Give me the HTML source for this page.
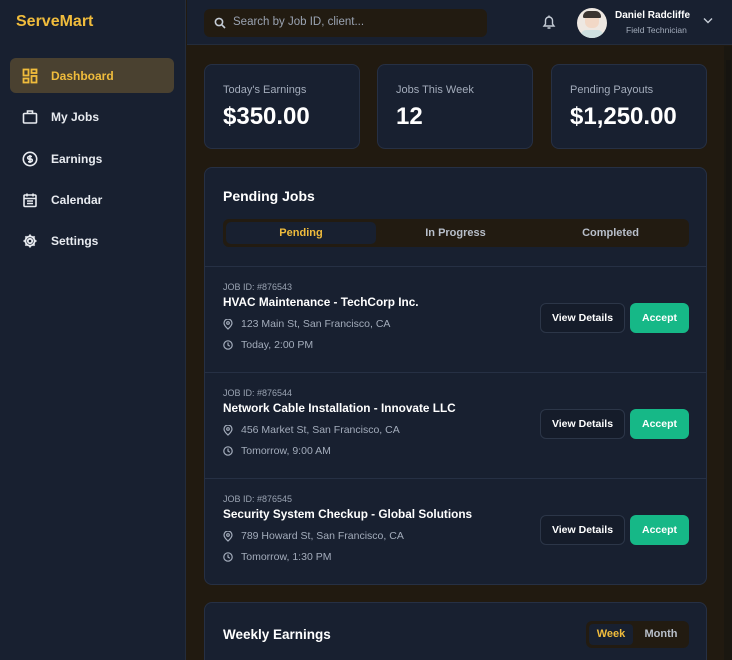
<!DOCTYPE html>
<html><head><style>
*{box-sizing:border-box;margin:0;padding:0}
html{width:732px;height:660px;overflow:hidden}
body{width:732px;height:660px;overflow:hidden;background:#211a10;font-family:"Liberation Sans",sans-serif;color:#fff;position:relative}
.side{position:absolute;left:0;top:0;width:186px;height:660px;background:#182030;border-right:1px solid #232c3c}
.logo{position:absolute;left:16px;top:13px;font-size:16px;font-weight:bold;color:#f0bc3c}
.nav{position:absolute;left:10px;width:164px;height:35px;display:flex;align-items:center;padding-left:12px;font-size:12px;font-weight:bold;color:#e8ebf0}
.nav svg{margin-right:13px}
.nav.act{background:#4a4130;color:#f0bc3c;border-radius:6px}
.top{position:absolute;left:187px;top:0;width:545px;height:45px;background:#182030;border-bottom:1px solid #232c3c}
.search{position:absolute;left:17px;top:9px;width:283px;height:28px;background:#221b11;border-radius:6px;font-size:11.5px;color:#9aa3b2;padding:7px 0 0 29px}
.card{position:absolute;background:#182030;border:1px solid #263044;border-radius:8px}
.lab{font-size:11px;color:#a3acbb;position:absolute;left:18px;top:19px}
.val{font-size:24px;font-weight:bold;position:absolute;left:18px;top:38px}
.job{position:absolute;left:0;width:502px;border-top:1px solid #263044;height:107px}
.jid{position:absolute;left:18px;top:15px;font-size:9px;color:#9aa3b2}
.jt{position:absolute;left:18px;top:28px;font-size:11.8px;font-weight:bold}
.jl{position:absolute;left:18px;font-size:10.5px;color:#a3acbb;display:flex;align-items:center}
.jl svg{margin-right:8px}
.vd{position:absolute;left:335px;top:36px;width:85px;height:30px;border:1px solid #2c3648;border-radius:6px;background:#151c2a;font-size:10.5px;font-weight:bold;text-align:center;line-height:28px}
.ac{position:absolute;left:425px;top:36px;width:59px;height:30px;border-radius:6px;background:#16b887;font-size:10.5px;font-weight:bold;text-align:center;line-height:30px}
</style></head><body>
<div class="side">
<div class="logo">ServeMart</div>
<div class="nav act" style="top:58px"><svg width="16" height="16" viewBox="0 0 16 16" fill="none" stroke="#f0bc3c" stroke-width="1.8"><rect x="1.5" y="1.5" width="5" height="6"/><rect x="9.5" y="1.5" width="5" height="3.5"/><rect x="1.5" y="10.5" width="5" height="4"/><rect x="9.5" y="8" width="5" height="6.5"/></svg>Dashboard</div>
<div class="nav" style="top:99px"><svg width="16" height="16" viewBox="0 0 16 16" fill="none" stroke="#e8ebf0" stroke-width="1.6"><rect x="1.5" y="4.5" width="13" height="9.5" rx="1"/><path d="M5.5 4.5V2h5v2.5"/></svg>My Jobs</div>
<div class="nav" style="top:141px"><svg width="16" height="16" viewBox="0 0 16 16" fill="none" stroke="#e8ebf0" stroke-width="1.6"><circle cx="8" cy="8" r="6.7"/><path d="M10 5.5H7a1.3 1.3 0 000 2.6h2a1.3 1.3 0 010 2.6H6M8 4v8"/></svg>Earnings</div>
<div class="nav" style="top:182px"><svg width="16" height="16" viewBox="0 0 16 16" fill="none" stroke="#e8ebf0" stroke-width="1.6"><rect x="2" y="3" width="12" height="11.5" rx="1"/><path d="M2 6.5h12M5 1.5v3M11 1.5v3M5 9h6M5 11.5h6"/></svg>Calendar</div>
<div class="nav" style="top:223px"><svg width="16" height="16" viewBox="0 0 16 16" fill="none" stroke="#e8ebf0" stroke-width="1.8"><circle cx="8" cy="8" r="2.2"/><path d="M8 1.5v2M8 12.5v2M1.5 8h2M12.5 8h2M3.4 3.4l1.4 1.4M11.2 11.2l1.4 1.4M3.4 12.6l1.4-1.4M11.2 4.8l1.4-1.4"/><circle cx="8" cy="8" r="4.6"/></svg>Settings</div>
</div>
<div class="top">
<div class="search"><svg style="position:absolute;left:10px;top:8px" width="12" height="12" viewBox="0 0 12 12" fill="none" stroke="#c5ccd6" stroke-width="1.6"><circle cx="5" cy="5" r="3.6"/><path d="M7.7 7.7L11 11"/></svg>Search by Job ID, client...</div>
<svg style="position:absolute;left:355px;top:14px" width="14" height="16" viewBox="0 0 14 16" fill="none" stroke="#c5ccd6" stroke-width="1.4"><path d="M2 12h10l-1.5-2V6.5a3.5 3.5 0 00-7 0V10z"/><path d="M5.5 14h3M7 1.5V3"/></svg>
<div style="position:absolute;left:390px;top:8px;width:30px;height:30px;border-radius:50%;background:#eee8e2;overflow:hidden"><div style="position:absolute;left:8px;top:5px;width:14px;height:15px;border-radius:6px;background:#f2d8c6"></div><div style="position:absolute;left:6px;top:3px;width:18px;height:7px;border-radius:8px 8px 2px 2px;background:#3a3430"></div><div style="position:absolute;left:4px;top:22px;width:22px;height:10px;border-radius:8px;background:#cfe0e0"></div></div>
<div style="position:absolute;left:428px;top:10px;font-size:10px;font-weight:bold">Daniel Radcliffe</div>
<div style="position:absolute;left:439px;top:25px;font-size:8.5px;color:#a3acbb">Field Technician</div>
<svg style="position:absolute;left:516px;top:17px" width="10" height="7" viewBox="0 0 10 7" fill="none" stroke="#c5ccd6" stroke-width="1.4"><path d="M1 1.5l4 4 4-4"/></svg>
</div>
<div style="position:absolute;left:724px;top:46px;width:8px;height:614px;background:#1a1710"></div>
<div style="position:absolute;left:726px;top:60px;width:5px;height:310px;background:#161410"></div>
<div class="card" style="left:204px;top:64px;width:156px;height:85px"><div class="lab">Today's Earnings</div><div class="val">$350.00</div></div>
<div class="card" style="left:377px;top:64px;width:156px;height:85px"><div class="lab">Jobs This Week</div><div class="val">12</div></div>
<div class="card" style="left:551px;top:64px;width:156px;height:85px"><div class="lab">Pending Payouts</div><div class="val">$1,250.00</div></div>
<div class="card" style="left:204px;top:167px;width:503px;height:418px">
<div style="position:absolute;left:18px;top:20px;font-size:14px;font-weight:bold">Pending Jobs</div>
<div style="position:absolute;left:18px;top:51px;width:466px;height:28px;background:#221b11;border-radius:6px;font-size:11px;font-weight:bold;color:#b8bfca">
<div style="position:absolute;left:3px;top:3px;width:150px;height:22px;background:#182030;border-radius:5px;color:#f0bc3c;text-align:center;line-height:22px">Pending</div>
<div style="position:absolute;left:155px;top:3px;width:155px;text-align:center;line-height:22px">In Progress</div>
<div style="position:absolute;left:310px;top:3px;width:155px;text-align:center;line-height:22px">Completed</div>
</div>
<div class="job" style="top:98px"><div class="jid">JOB ID: #876543</div><div class="jt">HVAC Maintenance - TechCorp Inc.</div>
<div class="jl" style="top:51px"><svg width="10" height="11" viewBox="0 0 10 11" fill="none" stroke="#a3acbb" stroke-width="1.2"><path d="M5 10s4-3.5 4-6a4 4 0 00-8 0c0 2.5 4 6 4 6z"/><circle cx="5" cy="4" r="1.3"/></svg>123 Main St, San Francisco, CA</div>
<div class="jl" style="top:72px"><svg width="10" height="10" viewBox="0 0 10 10" fill="none" stroke="#a3acbb" stroke-width="1.2"><circle cx="5" cy="5" r="4.2"/><path d="M5 2.5V5l1.8 1.2"/></svg>Today, 2:00 PM</div>
<div class="vd">View Details</div><div class="ac">Accept</div></div>
<div class="job" style="top:204px"><div class="jid">JOB ID: #876544</div><div class="jt">Network Cable Installation - Innovate LLC</div>
<div class="jl" style="top:51px"><svg width="10" height="11" viewBox="0 0 10 11" fill="none" stroke="#a3acbb" stroke-width="1.2"><path d="M5 10s4-3.5 4-6a4 4 0 00-8 0c0 2.5 4 6 4 6z"/><circle cx="5" cy="4" r="1.3"/></svg>456 Market St, San Francisco, CA</div>
<div class="jl" style="top:72px"><svg width="10" height="10" viewBox="0 0 10 10" fill="none" stroke="#a3acbb" stroke-width="1.2"><circle cx="5" cy="5" r="4.2"/><path d="M5 2.5V5l1.8 1.2"/></svg>Tomorrow, 9:00 AM</div>
<div class="vd">View Details</div><div class="ac">Accept</div></div>
<div class="job" style="top:310px"><div class="jid">JOB ID: #876545</div><div class="jt">Security System Checkup - Global Solutions</div>
<div class="jl" style="top:51px"><svg width="10" height="11" viewBox="0 0 10 11" fill="none" stroke="#a3acbb" stroke-width="1.2"><path d="M5 10s4-3.5 4-6a4 4 0 00-8 0c0 2.5 4 6 4 6z"/><circle cx="5" cy="4" r="1.3"/></svg>789 Howard St, San Francisco, CA</div>
<div class="jl" style="top:72px"><svg width="10" height="10" viewBox="0 0 10 10" fill="none" stroke="#a3acbb" stroke-width="1.2"><circle cx="5" cy="5" r="4.2"/><path d="M5 2.5V5l1.8 1.2"/></svg>Tomorrow, 1:30 PM</div>
<div class="vd">View Details</div><div class="ac">Accept</div></div>
</div>
<div class="card" style="left:204px;top:602px;width:503px;height:70px">
<div style="position:absolute;left:18px;top:24px;font-size:13.5px;font-weight:bold">Weekly Earnings</div>
<div style="position:absolute;left:381px;top:18px;width:103px;height:27px;background:#221b11;border-radius:6px;font-size:11px;font-weight:bold">
<div style="position:absolute;left:3px;top:3px;width:44px;height:21px;background:#182030;border-radius:4px;color:#f0bc3c;text-align:center;line-height:21px">Week</div>
<div style="position:absolute;left:50px;top:3px;width:50px;color:#b8bfca;text-align:center;line-height:21px">Month</div>
</div></div>
</body></html>
